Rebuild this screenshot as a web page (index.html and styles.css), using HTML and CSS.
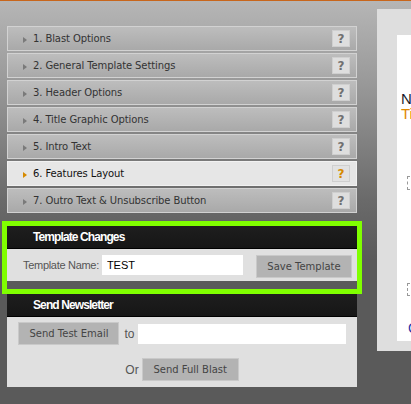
FILE: index.html
```html
<!DOCTYPE html>
<html>
<head>
<meta charset="utf-8">
<link rel="stylesheet" href="styles.css">
</head>
<body>
<div class="page">
  <div class="left">
    <ul class="accordion">
      <li class="acc-item"><span class="arrow"></span><span class="acc-title">1. Blast Options</span><span class="help">?</span></li>
      <li class="acc-item"><span class="arrow"></span><span class="acc-title">2. General Template Settings</span><span class="help">?</span></li>
      <li class="acc-item"><span class="arrow"></span><span class="acc-title">3. Header Options</span><span class="help">?</span></li>
      <li class="acc-item"><span class="arrow"></span><span class="acc-title">4. Title Graphic Options</span><span class="help">?</span></li>
      <li class="acc-item"><span class="arrow"></span><span class="acc-title">5. Intro Text</span><span class="help">?</span></li>
      <li class="acc-item active"><span class="arrow"></span><span class="acc-title">6. Features Layout</span><span class="help">?</span></li>
      <li class="acc-item"><span class="arrow"></span><span class="acc-title">7. Outro Text &amp; Unsubscribe Button</span><span class="help">?</span></li>
    </ul>

    <section class="panel highlight">
      <div class="panel-head">Template Changes</div>
      <div class="panel-body template-row">
        <label class="lbl">Template Name:</label>
        <input class="field name-field" type="text" value="TEST">
        <button class="btn save-btn">Save Template</button>
      </div>
    </section>

    <section class="panel">
      <div class="panel-head">Send Newsletter</div>
      <div class="panel-body send-body">
        <div class="send-row">
          <button class="btn">Send Test Email</button>
          <span class="lbl small">to</span>
          <input class="field email-field" type="text" value="">
        </div>
        <div class="send-row">
          <span class="lbl small">Or</span>
          <button class="btn">Send Full Blast</button>
        </div>
      </div>
    </section>
  </div>

  <div class="right">
    <div class="preview">
      <div class="pv-title"><span class="pv-main">Newsletter</span><br><span class="pv-sub">Title Graphic</span></div>
      <div class="pv-box"></div>
      <div class="pv-box second"></div>
      <div class="pv-link">Click here</div>
    </div>
  </div>
</div>
</body>
</html>
```
FILE: styles.css
```css
* { box-sizing: border-box; }

html, body {
  margin: 0;
  padding: 0;
  height: 404px;
  overflow: hidden;
}

body {
  background: linear-gradient(to bottom, #b6b6b6 0px, #9a9a9a 80px, #6a6a6a 200px, #5a5a5a 260px, #5a5a5a 100%);
  border-top: 1px solid #c8661c;
  font-family: "DejaVu Sans", Verdana, sans-serif;
}

.page {
  display: flex;
  align-items: flex-start;
  width: 411px;
  overflow: hidden;
}

.left {
  width: 350px;
  margin-left: 7px;
  margin-top: 25px;
  flex: none;
}

.accordion {
  list-style: none;
  margin: 0;
  padding: 0;
  display: flex;
  flex-direction: column;
  gap: 2px;
}

.acc-item {
  height: 25px;
  display: flex;
  align-items: center;
  border: 1px solid #d2d2d2;
  background: linear-gradient(to bottom, #bdbdbd, #a9a9a9);
  padding-left: 15px;
  padding-right: 6px;
}

.acc-item.active {
  background: #e6e6e6;
  border-color: #f2f2f2;
}

.arrow {
  width: 0;
  height: 0;
  border-top: 3px solid transparent;
  border-bottom: 3px solid transparent;
  border-left: 4px solid #7a7a7a;
  margin-top: 3px;
  margin-right: 6px;
}

.active .arrow { border-left-color: #d68a00; }

.acc-title {
  flex: 1;
  font-size: 10px;
  color: #333;
  letter-spacing: -0.1px;
  white-space: nowrap;
}

.active .acc-title { color: #111; }

.help {
  width: 18px;
  height: 17px;
  background: #dedede;
  border: 1px solid #cfcfcf;
  font-weight: bold;
  font-size: 12px;
  color: #707070;
  display: flex;
  align-items: center;
  justify-content: center;
}

.active .help { color: #d68a00; background: #e2e2e2; }

.panel {
  width: 350px;
}

.highlight {
  margin-top: 13px;
  outline: 5px solid #80ff00;
  padding-bottom: 8px;
}

.panel-head {
  height: 23px;
  background: linear-gradient(to bottom, #1e1e1e, #161616);
  border-bottom: 1px solid #000;
  color: #fff;
  font-family: "Liberation Sans", Arial, sans-serif;
  font-weight: bold;
  font-size: 12px;
  letter-spacing: -0.9px;
  padding-left: 26px;
  display: flex;
  align-items: center;
}

.highlight + .panel { margin-top: 5px; }

.panel-body {
  background: #e0e0e0;
}

.template-row {
  height: 32px;
  display: flex;
  align-items: flex-start;
  padding: 6px 5px 0 16px;
}

.lbl {
  font-family: "Liberation Sans", Arial, sans-serif;
  font-size: 11px;
  color: #555;
  letter-spacing: -0.3px;
  line-height: 20px;
  margin-right: 3px;
}

.lbl.small {
  font-size: 12px;
  letter-spacing: 0;
  color: #555;
}

.field {
  border: none;
  background: #fff;
  height: 20px;
  padding: 0 5px;
  font-family: "Liberation Sans", Arial, sans-serif;
  font-size: 11px;
  color: #000;
  outline: none;
}

.name-field { width: 141px; }

.btn {
  height: 23px;
  background: #b3b3b3;
  border: 1px solid #c9c9c9;
  font-family: "DejaVu Sans", Verdana, sans-serif;
  font-size: 10px;
  color: #444;
  padding: 0;
  cursor: pointer;
}

.save-btn {
  width: 96px;
  margin-left: auto;
}

.send-body {
  height: 70px;
  padding-top: 5px;
  display: flex;
  flex-direction: column;
  align-items: center;
  gap: 13px;
}

.send-row {
  display: flex;
  align-items: center;
  gap: 0;
}

.send-row .btn:first-child { width: 101px; }
.send-row .lbl { margin: 0 3px 0 5px; }
.send-row .btn:last-child { width: 97px; }
.send-row .lbl:first-child { margin: 0 3px 0 0; }

.email-field { width: 208px; }

.right {
  flex: none;
  width: 200px;
  margin-left: 20px;
  margin-top: 8px;
  height: 342px;
  background: #dedede;
  padding: 26px 0 10px 20px;
}

.preview {
  background: #fff;
  height: 100%;
  padding: 56px 0 0 4px;
  font-family: "Liberation Sans", Arial, sans-serif;
}

.pv-title {
  font-size: 15px;
  line-height: 15px;
}

.pv-main { color: #1a1a2a; }
.pv-sub { color: #e08a00; }

.pv-box {
  margin: 55px 0 0 6px;
  width: 60px;
  height: 14px;
  border: 1px dashed #999;
}

.pv-box.second { margin-top: 93px; height: 13px; }

.pv-link {
  margin: 24px 0 0 7px;
  font-size: 14px;
  color: #2233aa;
}
```
